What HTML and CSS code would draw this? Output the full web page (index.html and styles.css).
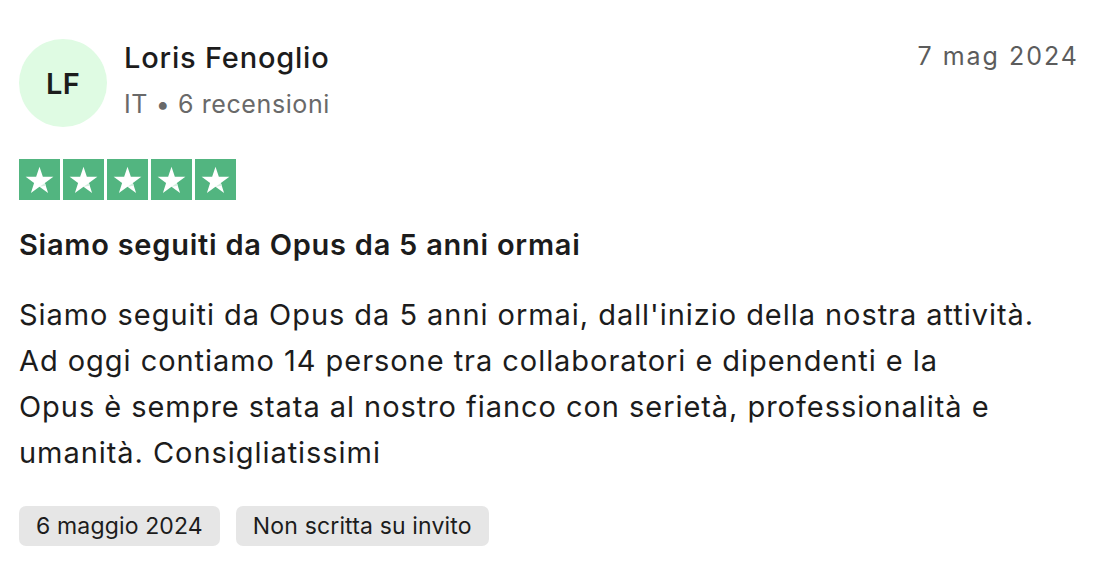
FILE: index.html
```html
<!DOCTYPE html>
<html lang="it">
<head>
<meta charset="utf-8">
<title>Recensione</title>
<link rel="stylesheet" href="styles.css">
</head>
<body>
<article class="review">
  <header class="review-header">
    <div class="avatar">LF</div>
    <div class="consumer">
      <div class="consumer-name">Loris Fenoglio</div>
      <div class="consumer-meta">IT • 6 recensioni</div>
    </div>
    <time class="review-date">7 mag 2024</time>
  </header>
  <div class="stars">
    <span class="star"><svg viewBox="0 0 24 24"><path d="M12 3.2l2.3 6.9h7.2l-5.8 4.3 2.2 6.9L12 17l-5.9 4.3 2.2-6.9-5.8-4.3h7.2z" fill="#fff"/><path d="M15.7 14.4l.6 1.9L12 17z" fill="#d6efe1"/></svg></span>
    <span class="star"><svg viewBox="0 0 24 24"><path d="M12 3.2l2.3 6.9h7.2l-5.8 4.3 2.2 6.9L12 17l-5.9 4.3 2.2-6.9-5.8-4.3h7.2z" fill="#fff"/><path d="M15.7 14.4l.6 1.9L12 17z" fill="#d6efe1"/></svg></span>
    <span class="star"><svg viewBox="0 0 24 24"><path d="M12 3.2l2.3 6.9h7.2l-5.8 4.3 2.2 6.9L12 17l-5.9 4.3 2.2-6.9-5.8-4.3h7.2z" fill="#fff"/><path d="M15.7 14.4l.6 1.9L12 17z" fill="#d6efe1"/></svg></span>
    <span class="star"><svg viewBox="0 0 24 24"><path d="M12 3.2l2.3 6.9h7.2l-5.8 4.3 2.2 6.9L12 17l-5.9 4.3 2.2-6.9-5.8-4.3h7.2z" fill="#fff"/><path d="M15.7 14.4l.6 1.9L12 17z" fill="#d6efe1"/></svg></span>
    <span class="star"><svg viewBox="0 0 24 24"><path d="M12 3.2l2.3 6.9h7.2l-5.8 4.3 2.2 6.9L12 17l-5.9 4.3 2.2-6.9-5.8-4.3h7.2z" fill="#fff"/><path d="M15.7 14.4l.6 1.9L12 17z" fill="#d6efe1"/></svg></span>
  </div>
  <h2 class="review-title">Siamo seguiti da Opus da 5 anni ormai</h2>
  <p class="review-text">Siamo seguiti da Opus da 5 anni ormai, dall'inizio della nostra attività.<br>Ad oggi contiamo 14 persone tra collaboratori e dipendenti e la<br>Opus è sempre stata al nostro fianco con serietà, professionalità e<br>umanità. Consigliatissimi</p>
  <div class="tags">
    <span class="tag">6 maggio 2024</span>
    <span class="tag">Non scritta su invito</span>
  </div>
</article>
</body>
</html>
```

FILE: styles.css
```css
html, body {
  margin: 0;
  padding: 0;
  background: #ffffff;
}
body {
  font-family: Inter, "Noto Sans", "Liberation Sans", sans-serif;
  color: #1c1c1c;
}
.review {
  padding: 38px 39px 0 19px;
}
.review-header {
  display: flex;
  align-items: flex-start;
}
.avatar {
  width: 88px;
  height: 88px;
  margin-top: 1px;
  border-radius: 50%;
  background: #dffbe3;
  display: flex;
  align-items: center;
  justify-content: center;
  font-size: 29px;
  font-weight: 600;
  letter-spacing: 0.3px;
  color: #1c1c1c;
  flex: none;
}
.consumer {
  margin-left: 17px;
  flex: 1;
}
.consumer-name {
  font-size: 29px;
  font-weight: 500;
  line-height: 40px;
  letter-spacing: 0.8px;
}
.consumer-meta {
  margin-top: 6px;
  font-size: 25px;
  line-height: 40px;
  color: #696969;
  letter-spacing: 0.6px;
}
.review-date {
  font-size: 25px;
  line-height: 40px;
  margin-top: -2px;
  color: #5c5c5c;
  letter-spacing: 2px;
  margin-right: -2px;
}
.stars {
  display: flex;
  gap: 3px;
  margin-top: 32px;
}
.star {
  width: 41px;
  height: 41px;
  background: #52b580;
  display: flex;
  align-items: center;
  justify-content: center;
}
.star svg {
  width: 35px;
  height: 35px;
}
.review-title {
  margin: 25px 0 0;
  font-size: 29px;
  font-weight: 600;
  line-height: 40px;
  letter-spacing: 0.75px;
}
.review-text {
  margin: 26.5px 0 0;
  font-size: 29px;
  line-height: 46px;
  letter-spacing: 0.95px;
}
.tags {
  display: flex;
  gap: 16px;
  margin-top: 30.5px;
}
.tag {
  background: #e6e6e6;
  border-radius: 7px;
  height: 40px;
  line-height: 40px;
  padding: 0 17px;
  font-size: 23px;
  letter-spacing: 0.15px;
  color: #1c1c1c;
}
```
